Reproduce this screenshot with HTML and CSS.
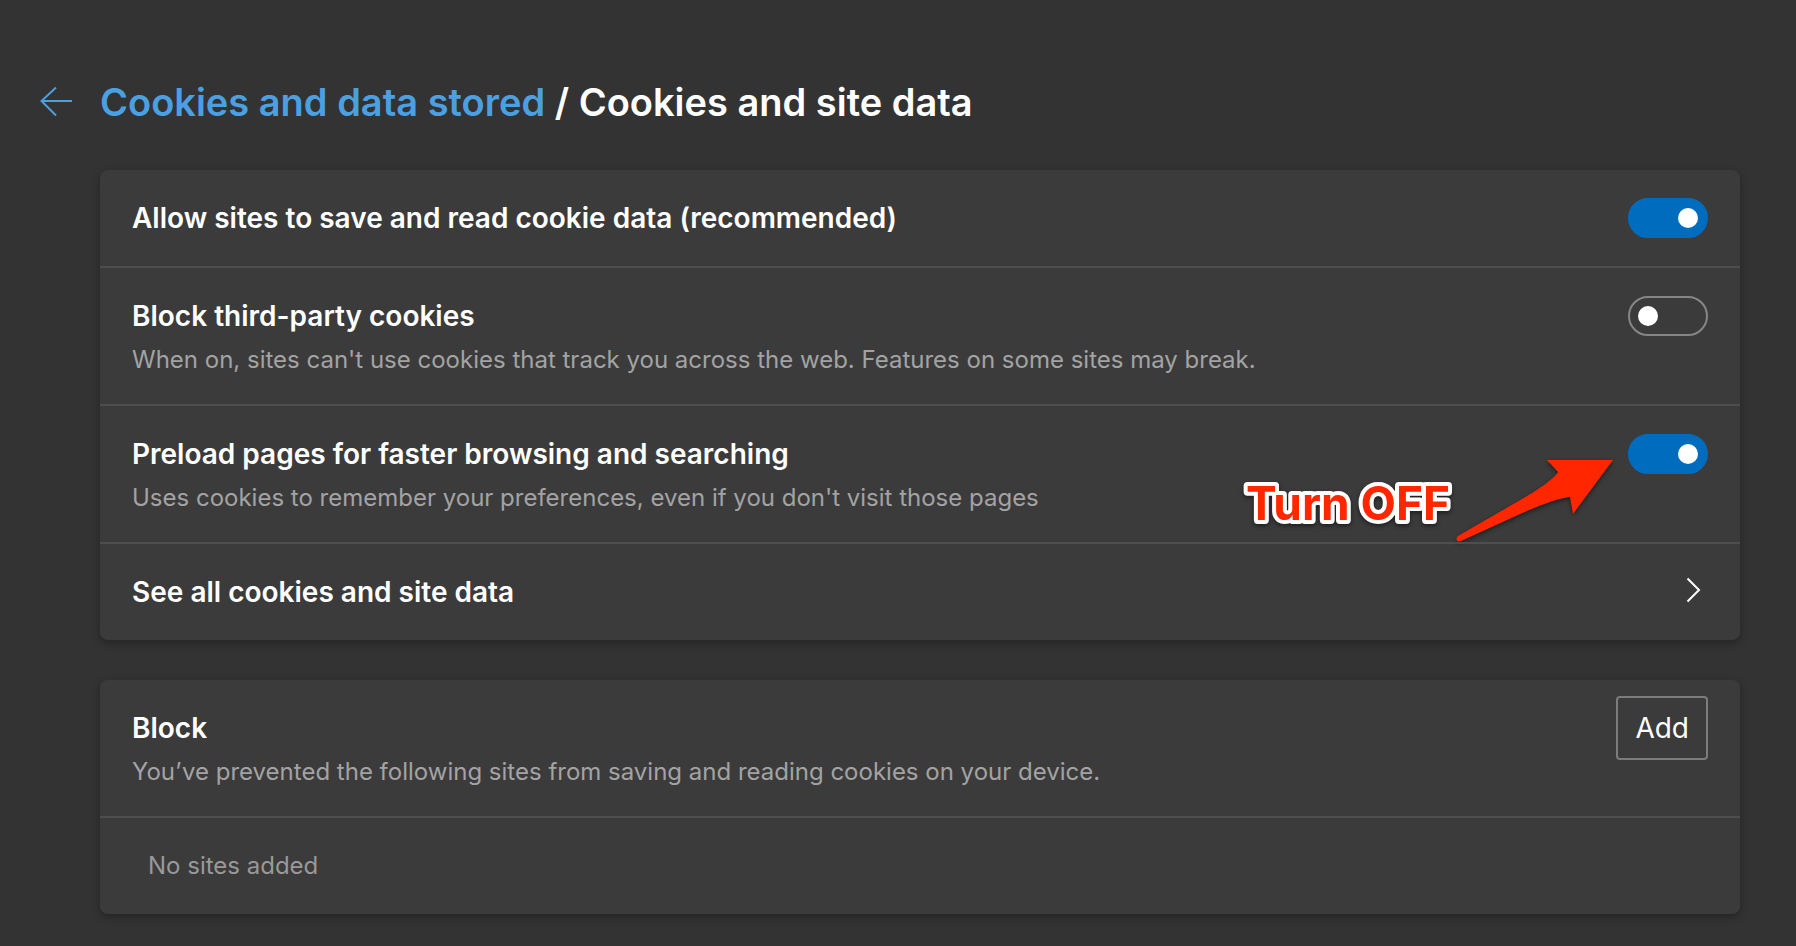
FILE: index.html
```
<!DOCTYPE html>
<html lang="en">
  <head>
    <meta charset="utf-8">
    <title>Cookies and site data</title>
    <link rel="stylesheet" href="styles.css">
  </head>
  <body>
    <header class="header">
      <a class="back" href="#" aria-label="Back">
        <svg width="32" height="30" viewBox="0 0 32 30" fill="none" stroke="currentColor" stroke-width="2">
          <path d="M32 14H2M16 0.5L1.5 14L16 28.5"/>
        </svg>
      </a>
      <h1 class="title"><a href="#">Cookies and data stored</a> / Cookies and site data</h1>
    </header>

    <main class="content">
      <section class="card">
        <div class="row">
          <label class="text" for="allow">
            <span class="name">Allow sites to save and read cookie data (recommended)</span>
          </label>
          <input class="toggle" type="checkbox" id="allow" checked>
        </div>
        <div class="row">
          <label class="text" for="third-party">
            <span class="name">Block third-party cookies</span>
            <span class="desc">When on, sites can't use cookies that track you across the web. Features on some sites may break.</span>
          </label>
          <input class="toggle" type="checkbox" id="third-party">
        </div>
        <div class="row">
          <label class="text" for="preload">
            <span class="name">Preload pages for faster browsing and searching</span>
            <span class="desc">Uses cookies to remember your preferences, even if you don't visit those pages</span>
          </label>
          <input class="toggle" type="checkbox" id="preload" checked>
          <div class="callout">
            <svg class="callout-text" width="210" height="84" viewBox="0 0 210 84">
              <text x="210" y="60" text-anchor="end">Turn OFF</text>
            </svg>
            <svg class="callout-arrow" width="158" height="84" viewBox="0 0 158 84">
              <path d="M157 0H91L102 12C99 18 82 30 66 39L2 76C-1 79 1 83 5 81L62 55C82 46 103 38 114 37L117 54Z" fill="#ff2600"/>
            </svg>
          </div>
        </div>
        <a class="row" href="#">
          <span class="text">
            <span class="name">See all cookies and site data</span>
          </span>
          <svg class="chevron" width="28" height="40" viewBox="0 0 28 40" fill="none" stroke="currentColor" stroke-width="2">
            <path d="M7.5 6.5L19 18L7.5 29.5"/>
          </svg>
        </a>
      </section>

      <section class="card">
        <div class="row">
          <div class="text">
            <h2 class="name">Block</h2>
            <p class="desc">You’ve prevented the following sites from saving and reading cookies on your device.</p>
          </div>
          <button class="add" type="button">Add</button>
        </div>
        <div class="row empty">
          <p class="name">No sites added</p>
        </div>
      </section>
    </main>
  </body>
</html>
```
FILE: styles.css
```
* {
  box-sizing: border-box;
}

body {
  margin: 0;
  padding: 72px 56px 32px 40px;
  background: #333;
  color: #fff;
  font-family: Inter, sans-serif;
}

a {
  color: inherit;
  text-decoration: none;
}

h1, h2, p {
  margin: 0;
}

.header {
  display: flex;
  align-items: center;
  gap: 28px;
  margin-bottom: 38px;
}

.back {
  display: flex;
  color: #4ba0e1;
}

.title {
  font-size: 38px;
  font-weight: 600;
  line-height: 60px;
}

.title a {
  color: #4ba0e1;
}

.content {
  display: flex;
  flex-direction: column;
  gap: 40px;
  margin-left: 60px;
}

.card {
  background: #3b3b3b;
  border-radius: 8px;
  box-shadow: 0 3px 8px rgba(0, 0, 0, 0.3);
}

.row {
  position: relative;
  display: flex;
  align-items: flex-start;
  justify-content: space-between;
  gap: 32px;
  padding: 28px 32px;
}

.row + .row {
  border-top: 2px solid #4e4e4e;
}

.text {
  display: flex;
  flex-direction: column;
  gap: 8px;
}

.name {
  font-size: 28px;
  font-weight: 600;
  line-height: 40px;
}

.desc {
  color: #a3a3a3;
  font-size: 24px;
  line-height: 32px;
}

.toggle {
  appearance: none;
  flex: none;
  display: flex;
  align-items: center;
  width: 80px;
  height: 40px;
  margin: 0;
  padding: 0 8px;
  border: 2px solid #868686;
  border-radius: 20px;
}

.toggle::before {
  content: "";
  width: 20px;
  height: 20px;
  border-radius: 50%;
  background: #fff;
}

.toggle:checked {
  justify-content: flex-end;
  background: #006cbe;
  border-color: #006cbe;
}

.add {
  height: 64px;
  margin: -12px 0;
  padding: 0 17px;
  background: none;
  border: 2px solid #7c7c7c;
  border-radius: 4px;
  color: #fff;
  font: 400 28px Inter, sans-serif;
}

.empty {
  padding-left: 48px;
}

.empty .name {
  color: #999;
  font-size: 24px;
  font-weight: 400;
}

.callout {
  position: absolute;
  top: 54px;
  right: 126px;
  display: flex;
  gap: 6px;
  filter: drop-shadow(0 2px 2px rgba(0, 0, 0, 0.5));
  pointer-events: none;
}

.callout svg {
  overflow: visible;
}

.callout-text {
  fill: #ff2600;
  stroke: #fff;
  stroke-width: 8px;
  stroke-linejoin: round;
  paint-order: stroke;
  font-size: 46px;
  font-weight: 700;
}
```
